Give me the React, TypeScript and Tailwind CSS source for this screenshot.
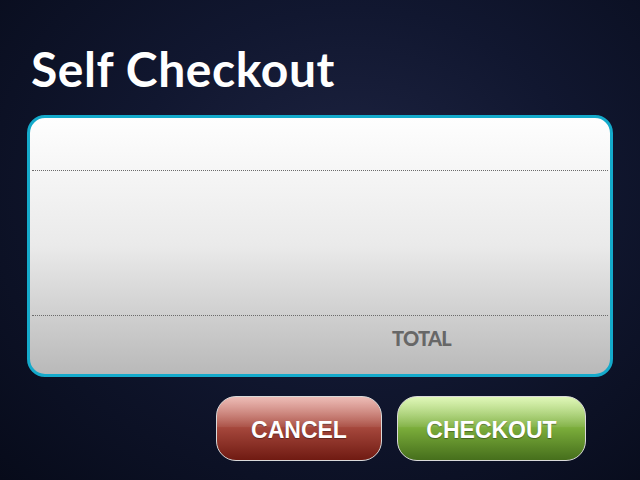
import React from 'react';

const App = () => {
    return (
        <div className="w-[640px] h-[480px] overflow-hidden flex flex-col bg-[radial-gradient(ellipse_at_55%_40%,#1e2442_0%,#111730_45%,#070b1a_100%)]">
            {/* Header */}
            <h1 className="pl-[31px] pt-[38px] h-[115px] text-white text-[48px] leading-[62px] font-bold tracking-[0.6px] [font-family:Lato,'Open_Sans',sans-serif]">
                Self Checkout
            </h1>

            {/* Receipt panel */}
            <div className="mx-[27px] h-[262px] rounded-[18px] border-[3px] border-[#14aacb] bg-gradient-to-b from-[#fefefe] via-[#eaeaea] to-[#b9b9b9] flex flex-col">
                <div className="h-[52px]" />
                <div className="mx-[2px] border-t border-dotted border-[#6b6b6b]" />
                <div className="flex-1" />
                <div className="mx-[2px] border-t border-dotted border-[#6b6b6b]" />
                <div className="h-[58px] pt-[7px] pl-[362px]">
                    <span className="text-[20px] font-black tracking-[-0.7px] text-[#676767] [font-family:Lato,sans-serif]">
                        TOTAL
                    </span>
                </div>
            </div>

            {/* Actions */}
            <div className="mt-[19px] pr-[54px] flex justify-end gap-[15px]">
                <button
                    type="button"
                    className="relative w-[166px] h-[65px] pt-[3px] rounded-[20px] border border-[#d9d9d9] overflow-hidden bg-gradient-to-b from-[#e7a59e] via-[#a4463b] to-[#701a12] text-white text-[23px] font-bold [font-family:'Liberation_Sans',Arial,sans-serif] [text-shadow:0_1px_1px_rgba(0,0,0,0.35)]"
                >
                    <span className="absolute inset-x-0 top-0 h-[30px] bg-gradient-to-b from-white/25 to-white/5" />
                    <span className="relative">CANCEL</span>
                </button>
                <button
                    type="button"
                    className="relative w-[189px] h-[65px] pt-[3px] rounded-[20px] border border-[#d9d9d9] overflow-hidden bg-gradient-to-b from-[#d5f5a0] via-[#7aac3a] to-[#466f1c] text-white text-[23px] font-bold [font-family:'Liberation_Sans',Arial,sans-serif] [text-shadow:0_1px_1px_rgba(0,0,0,0.35)]"
                >
                    <span className="absolute inset-x-0 top-0 h-[30px] bg-gradient-to-b from-white/25 to-white/5" />
                    <span className="relative">CHECKOUT</span>
                </button>
            </div>
        </div>
    );
};

export default App;
